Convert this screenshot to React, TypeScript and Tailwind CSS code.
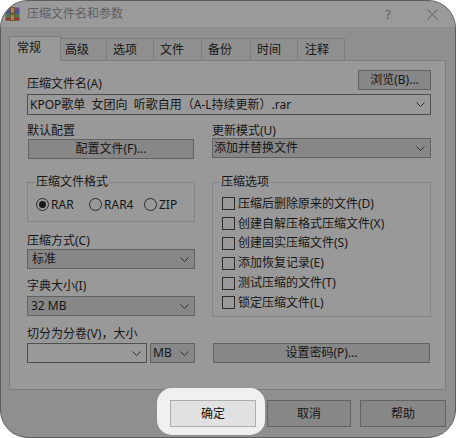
import React from 'react';

function Chevron() {
  return (
    <svg width="9" height="5" viewBox="0 0 9 5" className="shrink-0">
      <path d="M0.5 0.5 L4.5 4.5 L8.5 0.5" fill="none" stroke="#2e2e2e" strokeWidth="1" />
    </svg>
  );
}

function Combo({ text, className = '', editable = false, pl = 'pl-[3px]' }: { text?: string; className?: string; editable?: boolean; pl?: string }) {
  return (
    <div
      className={`flex h-[20px] items-center border pr-[5px] ${pl} ${
        editable ? 'border-[#4f4f4f] bg-[#999999]' : 'border-[#626262] bg-[#878787]'
      } ${className}`}
    >
      <span className="flex-1 truncate whitespace-pre leading-[18px]">{text}</span>
      <Chevron />
    </div>
  );
}

function Button({ children, className = '' }: { children: React.ReactNode; className?: string }) {
  return (
    <button className={`flex h-[20px] items-center justify-center border border-[#626262] bg-[#878787] leading-none ${className}`}>
      {children}
    </button>
  );
}

function Radio({ label, checked = false, className = '' }: { label: string; checked?: boolean; className?: string }) {
  return (
    <div className={`flex items-center gap-[2px] ${className}`}>
      <span className="flex h-[13px] w-[13px] items-center justify-center rounded-full border border-[#2c2c2c] bg-[#999999]">
        {checked && <span className="h-[7px] w-[7px] rounded-full bg-[#1a1a1a]" />}
      </span>
      <span className="leading-[16px]">{label}</span>
    </div>
  );
}

function Check({ label }: { label: string }) {
  return (
    <div className="flex h-[19.8px] items-center gap-[3px]">
      <span className="h-[13px] w-[13px] border border-[#2c2c2c] bg-[#999999]" />
      <span className="leading-[16px]">{label}</span>
    </div>
  );
}

function GroupTitle({ children }: { children: React.ReactNode }) {
  return (
    <span className="absolute left-[7px] top-[-9px] bg-[#999999] px-[1px] leading-[16px]">{children}</span>
  );
}

function RarIcon() {
  return (
    <svg width="15" height="14" viewBox="0 0 15 14">
      <rect x="0.5" y="0.5" width="14" height="3.5" fill="#6f4784" />
      <rect x="0.5" y="4" width="14" height="3.2" fill="#3f5897" />
      <rect x="0.5" y="7.2" width="14" height="3.2" fill="#4a7a43" />
      <rect x="0.5" y="10.4" width="14" height="3.3" fill="#8b3b30" />
      <rect x="5.5" y="0.5" width="4" height="13.2" fill="#a4865a" stroke="#5a4020" strokeWidth="0.6" />
      <rect x="6.3" y="5.5" width="2.4" height="2.6" fill="#6c5028" />
    </svg>
  );
}

const tabs = [
  { label: '高级', w: 'w-[47px]', pl: 'pl-[4px]' },
  { label: '选项', w: 'w-[48px]', pl: 'pl-[6px]' },
  { label: '文件', w: 'w-[49px]', pl: 'pl-[6px]' },
  { label: '备份', w: 'w-[50px]', pl: 'pl-[6px]' },
  { label: '时间', w: 'w-[48px]', pl: 'pl-[6px]' },
  { label: '注释', w: 'w-[48px]', pl: 'pl-[7px]' },
];

const options = [
  '压缩后删除原来的文件(D)',
  '创建自解压格式压缩文件(X)',
  '创建固实压缩文件(S)',
  '添加恢复记录(E)',
  '测试压缩的文件(T)',
  '锁定压缩文件(L)',
];

export default function App() {
  return (
    <div className="h-[438px] w-[456px] overflow-hidden bg-white font-['Noto_Sans','Noto_Sans_CJK_SC',sans-serif] text-[12px] text-[#161616]">
      <div className="flex h-full w-full flex-col overflow-hidden rounded-[28px] border border-[#5c5c5c] bg-[#8f8f8f]">
        {/* Title bar */}
        <div className="flex h-[26px] shrink-0 items-center bg-[#9a9a9a] pl-[4px] pr-[17px]">
          <RarIcon />
          <span className="ml-[7px] text-[12px] leading-none text-[#5e5e5e]">压缩文件名和参数</span>
          <span className="ml-auto text-[13px] leading-none text-[#606060]">?</span>
          <svg width="11" height="11" viewBox="0 0 11 11" className="ml-[36px]">
            <path d="M0.5 0.5 L10.5 10.5 M10.5 0.5 L0.5 10.5" stroke="#606060" strokeWidth="1" />
          </svg>
        </div>

        {/* Body */}
        <div className="flex flex-1 flex-col pl-[8px] pr-[9px] pt-[9px]">
          {/* Tabs */}
          <div className="flex h-[24px] items-end">
            <div className="relative z-10 mb-[-1px] h-[25px] w-[52px] border border-b-0 border-[#7e7e7e] bg-[#999999] pl-[7px] pt-[3px] leading-[16px]">
              常规
            </div>
            {tabs.map((t) => (
              <div
                key={t.label}
                className={`-ml-px h-[22px] ${t.w} ${t.pl} border border-b-0 border-[#7e7e7e] bg-[#8f8f8f] pt-[3px] leading-[16px]`}
              >
                {t.label}
              </div>
            ))}
          </div>

          {/* Panel */}
          <div className="flex h-[330px] flex-col border border-[#7e7e7e] bg-[#999999] pl-[17px] pr-[14px] pt-[9px]">
            <div className="flex h-[20px] items-end justify-between">
              <span className="mb-[-1px] leading-[14px]">压缩文件名(A)</span>
              <Button className="w-[73px]">浏览(B)...</Button>
            </div>
            <Combo editable className="mt-[4px] h-[21px]" pl="pl-[2px]" text="KPOP歌单  女团向  听歌自用（A-L持续更新）.rar" />

            <div className="mt-[8px] flex">
              {/* Left column */}
              <div className="flex w-[168px] flex-col">
                <span className="h-[16px] leading-[16px]">默认配置</span>
                <Button className="ml-px w-[166px]">配置文件(F)...</Button>

                <div className="relative mt-[23px] flex h-[40px] items-center border border-[#858585] pl-[8px] pt-[5px]">
                  <GroupTitle>压缩文件格式</GroupTitle>
                  <Radio label="RAR" checked className="w-[53px]" />
                  <Radio label="RAR4" className="w-[55px]" />
                  <Radio label="ZIP" />
                </div>

                <span className="mt-[11px] h-[16px] leading-[16px]">压缩方式(C)</span>
                <Combo text="标准" pl="pl-[4px]" />

                <span className="mt-[9px] h-[16px] leading-[16px]">字典大小(I)</span>
                <Combo text="32 MB" className="mt-[2px]" />

                <span className="mt-[10px] h-[16px] leading-[16px]">切分为分卷(V)，大小</span>
                <div className="mt-[1px] flex gap-[3px]">
                  <Combo editable className="w-[120px]" text="" />
                  <Combo text="MB" className="w-[45px]" pl="pl-[2px]" />
                </div>
              </div>

              {/* Right column */}
              <div className="ml-[17px] flex flex-1 flex-col">
                <span className="h-[16px] leading-[16px]">更新模式(U)</span>
                <Combo text="添加并替换文件" className="-mt-px" pl="pl-[1px]" />

                <div className="relative mt-[24px] flex h-[135px] flex-col border border-[#858585] pl-[9px] pt-[11px]">
                  <GroupTitle>压缩选项</GroupTitle>
                  {options.map((o) => (
                    <Check key={o} label={o} />
                  ))}
                </div>

                <Button className="ml-px mt-[26px] w-[217px]">设置密码(P)...</Button>
              </div>
            </div>
          </div>

          {/* Bottom buttons */}
          <div className="mt-[10px] flex justify-end">
            <div className="-mb-[8px] -ml-[13px] -mr-[9px] -mt-[12px] rounded-[15px] bg-[#f0f0f0] pb-[8px] pl-[13px] pr-[9px] pt-[12px]">
              <button className="flex h-[27px] w-[86px] items-center justify-center border border-[#adadad] bg-[#e1e1e1] text-[#111]">
                确定
              </button>
            </div>
            <button className="ml-[11px] flex h-[27px] w-[84px] items-center justify-center border border-[#626262] bg-[#878787]">
              取消
            </button>
            <button className="ml-[9px] flex h-[27px] w-[86px] items-center justify-center border border-[#626262] bg-[#878787]">
              帮助
            </button>
          </div>
        </div>
      </div>
    </div>
  );
}
